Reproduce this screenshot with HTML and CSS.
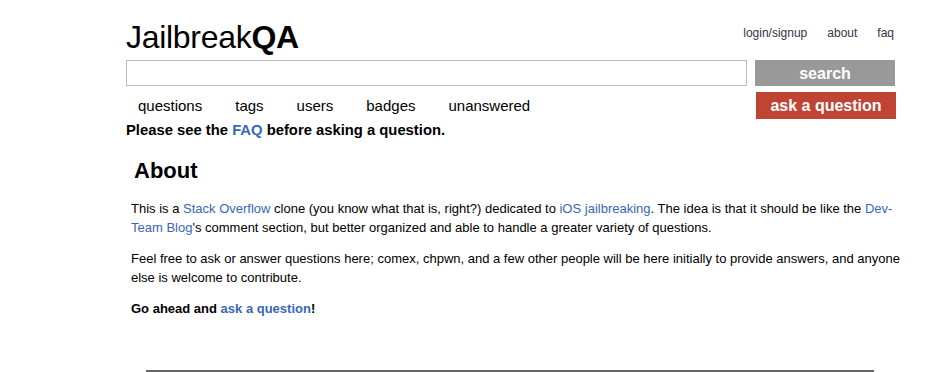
FILE: index.html
```html
<!DOCTYPE html>
<html lang="en">
<head>
  <meta charset="UTF-8">
  <title>About - JailbreakQA</title>
  <link rel="stylesheet" href="styles.css">
</head>
<body>
  <div class="page">
    <div class="header">
      <div class="logo">Jailbreak<b>QA</b></div>
      <div class="toplinks">
        <a href="#">login/signup</a>
        <a href="#">about</a>
        <a href="#">faq</a>
      </div>
    </div>

    <div class="searchrow">
      <input type="text" class="searchbox">
      <button class="btn btn-search">search</button>
    </div>

    <div class="navrow">
      <div class="nav">
        <a href="#">questions</a>
        <a href="#">tags</a>
        <a href="#">users</a>
        <a href="#">badges</a>
        <a href="#">unanswered</a>
      </div>
      <button class="btn btn-ask">ask a question</button>
    </div>

    <div class="notice">Please see the <a href="#">FAQ</a> before asking a question.</div>

    <div class="content">
      <h1>About</h1>
      <p>This is a <a href="#">Stack Overflow</a> clone (you know what that is, right?) dedicated to <a href="#">iOS jailbreaking</a>. The idea is that it should be like the <a href="#">Dev-Team Blog</a>'s comment section, but better organized and able to handle a greater variety of questions.</p>
      <p>Feel free to ask or answer questions here; comex, chpwn, and a few other people will be here initially to provide answers, and anyone else is welcome to contribute.</p>
      <p class="bold">Go ahead and <a href="#">ask a question</a>!</p>
    </div>

    <div class="footer"></div>
  </div>
</body>
</html>
```

FILE: styles.css
```css
body {
  margin: 0;
  background: #fff;
  font-family: "Liberation Sans", Arial, sans-serif;
  color: #000;
}

a {
  color: #3a66b8;
  text-decoration: none;
}

.page {
  width: 770px;
  margin-left: 126px;
}

.header {
  display: flex;
  justify-content: space-between;
  align-items: flex-start;
  height: 60px;
}

.logo {
  font-size: 32px;
  line-height: 32px;
  margin-top: 21px;
  letter-spacing: -0.3px;
}

.toplinks {
  display: flex;
  gap: 20px;
  margin-top: 26px;
  margin-right: 2px;
  font-size: 12px;
}

.toplinks a {
  color: #333344;
}

.searchrow {
  display: flex;
  gap: 8px;
}

.searchbox {
  width: 621px;
  height: 26px;
  box-sizing: border-box;
  border: 1px solid #bbb;
  margin: 0;
  padding: 2px 4px;
}

.btn {
  width: 140px;
  height: 26px;
  border: none;
  color: #fff;
  font-family: "Liberation Sans", Arial, sans-serif;
  font-weight: bold;
  font-size: 16px;
  padding: 1px 0 0;
}

.btn-search {
  background: #999;
}

.btn-ask {
  background: #bf4434;
  height: 27px;
}

.navrow {
  display: flex;
  justify-content: space-between;
  margin-top: 6px;
}

.nav {
  display: flex;
  gap: 33px;
  margin-left: 12px;
  font-size: 15px;
  padding-top: 5px;
}

.nav a {
  color: #000;
}

.notice {
  font-size: 14.8px;
  font-weight: bold;
  margin-top: 3px;
}

.content {
  padding: 20px 0 0 5px;
  width: 772px;
  font-size: 13px;
  line-height: 19px;
}

.content h1 {
  font-size: 22px;
  margin: 0 0 15px 3px;
  line-height: 26px;
}

.content p {
  margin: 0 0 12px;
}

.content p.bold {
  font-weight: bold;
}

.footer {
  margin: 52px 0 0 20px;
  width: 728px;
  border-top: 2px solid #666;
}
```
